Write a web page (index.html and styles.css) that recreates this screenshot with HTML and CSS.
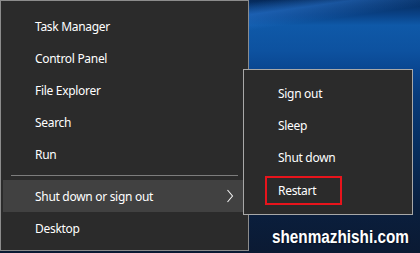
FILE: index.html
```html
<!DOCTYPE html>
<html lang="en">
<head>
    <title>Power User Menu</title>
    <link rel="stylesheet" href="styles.css">
</head>
<body>
    <div class="desktop">
        <div class="power-menu">
            <div class="menu-item">Task Manager</div>
            <div class="menu-item">Control Panel</div>
            <div class="menu-item">File Explorer</div>
            <div class="menu-item">Search</div>
            <div class="menu-item">Run</div>
            <div class="separator"></div>
            <div class="menu-item active">
                <span>Shut down or sign out</span>
                <svg class="chevron" width="8" height="14" viewBox="0 0 8 14">
                    <polyline points="1.5,1 6.5,7 1.5,13" fill="none" stroke="#f2f2f2" stroke-width="1.1"/>
                </svg>
            </div>
            <div class="menu-item">Desktop</div>
        </div>

        <div class="sub-menu">
            <div class="menu-item">Sign out</div>
            <div class="menu-item">Sleep</div>
            <div class="menu-item">Shut down</div>
            <div class="menu-item marked"><span class="highlight-box">Restart</span></div>
        </div>

        <div class="watermark">shenmazhishi.com</div>
    </div>
</body>
</html>
```

FILE: styles.css
```css
body {
    margin: 0;
    font-family: 'Noto Sans', 'Open Sans', sans-serif;
    font-size: 12px;
    letter-spacing: -0.3px;
    color: #ffffff;
}

.desktop {
    position: relative;
    width: 420px;
    height: 253px;
    overflow: hidden;
    background:
        linear-gradient(172deg, transparent 12%, rgba(45, 125, 220, 0.5) 16%, transparent 21%),
        linear-gradient(180deg, #05295a 0%, #0a4388 6%, #0f59a8 10%, #0d52a0 20%, #0a4792 27%, #083b7a 38%, #072d5c 60%, #0a1f3e 82%, #0b1a33 100%);
}

.power-menu {
    box-sizing: border-box;
    width: 249px;
    height: 251px;
    padding-top: 9px;
    background-color: #2b2b2b;
    border: 1px solid #8c8c8c;
}

.menu-item {
    display: flex;
    align-items: center;
    height: 32px;
    padding-left: 34px;
}

.separator {
    margin: 5px 10px 4px;
    border-top: 1px solid #7d7d7d;
}

.power-menu .active {
    margin: 0 2px;
    padding-left: 32px;
    padding-right: 12px;
    justify-content: space-between;
    background-color: #414141;
}

.chevron {
    display: block;
}

.sub-menu {
    position: absolute;
    left: 243px;
    top: 69px;
    box-sizing: border-box;
    width: 170px;
    height: 146px;
    padding-top: 7px;
    background-color: #2b2b2b;
    border: 1px solid #a8a8a8;
}

.sub-menu .marked {
    padding-left: 21px;
    padding-top: 1px;
}

.highlight-box {
    display: inline-block;
    line-height: 21px;
    padding: 2px 24px 2px 11px;
    border: 2px solid #e8141c;
}

.watermark {
    position: absolute;
    left: 272px;
    top: 227px;
    font-family: 'Liberation Sans', Arial, sans-serif;
    font-weight: bold;
    font-size: 18px;
    line-height: 20px;
    letter-spacing: 0;
    color: #ffffff;
    text-shadow: 1px 1px 1px #0a1528, -1px 0 1px #0a1528;
    transform: scaleX(0.85);
    transform-origin: left top;
}
```
